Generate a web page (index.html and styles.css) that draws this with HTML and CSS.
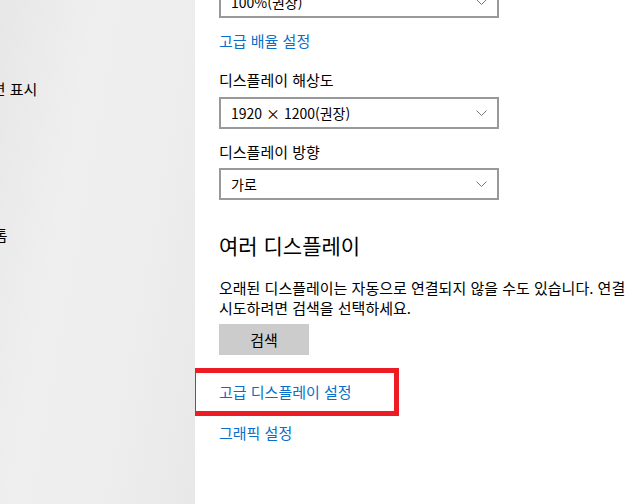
FILE: index.html
```html
<!DOCTYPE html>
<html lang="ko">
<head>
    <meta charset="UTF-8">
    <meta name="viewport" content="width=device-width, initial-scale=1.0">
    <title>디스플레이 설정</title>
    <link rel="stylesheet" href="styles.css">
</head>
<body>
    <div class="window">
        <nav class="sidebar">
            <div class="nav-item nav-display">화면 표시</div>
            <div class="nav-item nav-other">알림 톰</div>
        </nav>

        <main class="content">
            <div class="select">
                <span>100%(권장)</span>
                <svg class="chevron" width="11" height="6" viewBox="0 0 11 6"><path d="M0.5 0.5 L5.5 5.5 L10.5 0.5" fill="none" stroke="#777" stroke-width="1"/></svg>
            </div>
            <a class="link scale-link" href="#">고급 배율 설정</a>

            <div class="field-label">디스플레이 해상도</div>
            <div class="select">
                <span>1920 × 1200(권장)</span>
                <svg class="chevron" width="11" height="6" viewBox="0 0 11 6"><path d="M0.5 0.5 L5.5 5.5 L10.5 0.5" fill="none" stroke="#777" stroke-width="1"/></svg>
            </div>

            <div class="field-label">디스플레이 방향</div>
            <div class="select">
                <span>가로</span>
                <svg class="chevron" width="11" height="6" viewBox="0 0 11 6"><path d="M0.5 0.5 L5.5 5.5 L10.5 0.5" fill="none" stroke="#777" stroke-width="1"/></svg>
            </div>

            <h2>여러 디스플레이</h2>
            <p class="note">오래된 디스플레이는 자동으로 연결되지 않을 수도 있습니다. 연결을 시도하려면 검색을 선택하세요.</p>
            <button class="btn">검색</button>

            <div class="highlight">
                <a class="link" href="#">고급 디스플레이 설정</a>
            </div>
            <a class="link graphics-link" href="#">그래픽 설정</a>
        </main>
    </div>
</body>
</html>
```

FILE: styles.css
```css
body {
    margin: 0;
    font-family: "Noto Sans CJK KR", "Noto Sans", sans-serif;
    font-size: 15px;
    color: #000;
    background: #fff;
    overflow: hidden;
}
.window {
    display: flex;
    height: 504px;
}
.sidebar {
    width: 195px;
    flex-shrink: 0;
    overflow: hidden;
    background: linear-gradient(100deg, #e7e7e7 0%, #efefef 35%, #ededed 70%, #e8e8e8 100%);
}
.nav-item {
    white-space: nowrap;
    line-height: 20px;
}
.nav-display {
    margin: 79px 0 0 -22px;
}
.nav-other {
    margin: 126px 0 0 -38px;
}
.content {
    flex: 1;
    padding-left: 24px;
    margin-top: -14px;
    overflow: hidden;
}
.select {
    box-sizing: border-box;
    width: 280px;
    height: 32px;
    border: 2px solid #999;
    display: flex;
    align-items: center;
    justify-content: space-between;
    padding: 0 10px 0 10px;
    font-size: 14px;
    white-space: nowrap;
}
.chevron {
    display: block;
}
.link {
    display: block;
    color: #0a6fc9;
    text-decoration: none;
    line-height: 20px;
}
.scale-link {
    margin: 13px 0 0;
}
.field-label {
    line-height: 20px;
    margin: 19px 0 7px;
}
.select + .field-label {
    margin-top: 13px;
    margin-bottom: 6px;
}
h2 {
    font-size: 21px;
    font-weight: 400;
    line-height: 28px;
    margin: 31px 0 0;
}
.note {
    margin: 19px 0 0;
    line-height: 20px;
    width: 440px;
    word-break: keep-all;
}
.btn {
    display: block;
    width: 90px;
    height: 31px;
    margin-top: 6px;
    border: none;
    background: #ccc;
    font-family: inherit;
    font-size: 15px;
    color: #000;
    padding: 0;
}
.highlight {
    width: 208px;
    box-sizing: border-box;
    margin: 13px 0 0 -28px;
    border: 5px solid #ed1c24;
    padding: 9px 0 9px 23px;
}
.graphics-link {
    margin-top: 7px;
}
```
